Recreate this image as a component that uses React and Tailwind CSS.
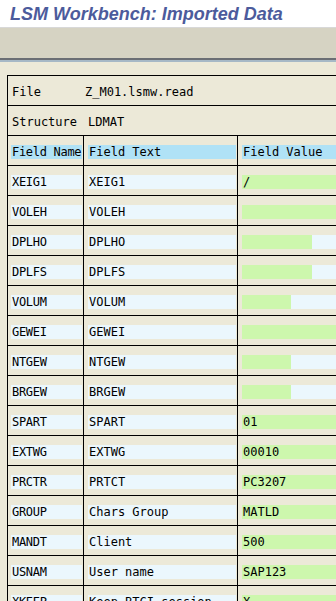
const rows = [
  { name: "XEIG1", text: "XEIG1", value: "/", fill: null },
  { name: "VOLEH", text: "VOLEH", value: "", fill: null },
  { name: "DPLHO", text: "DPLHO", value: "", fill: 70 },
  { name: "DPLFS", text: "DPLFS", value: "", fill: 70 },
  { name: "VOLUM", text: "VOLUM", value: "", fill: 49 },
  { name: "GEWEI", text: "GEWEI", value: "", fill: null },
  { name: "NTGEW", text: "NTGEW", value: "", fill: 49 },
  { name: "BRGEW", text: "BRGEW", value: "", fill: 49 },
  { name: "SPART", text: "SPART", value: "01", fill: null },
  { name: "EXTWG", text: "EXTWG", value: "00010", fill: null },
  { name: "PRCTR", text: "PRTCT", value: "PC3207", fill: null },
  { name: "GROUP", text: "Chars Group", value: "MATLD", fill: null },
  { name: "MANDT", text: "Client", value: "500", fill: null },
  { name: "USNAM", text: "User name", value: "SAP123", fill: null },
  { name: "XKEEP", text: "Keep BTCI session", value: "X", fill: null },
];

const mono = "font-['DejaVu_Sans_Mono',monospace] text-[12px] leading-[14px] text-black whitespace-pre";

function ValueCell({ value, fill }) {
  return (
    <div className="flex h-[14px] w-[190px] bg-[#ebf7fd]">
      <div
        className={`h-[14px] bg-[#cdf7ad] pl-px ${mono}`}
        style={{ width: fill ? fill : "100%" }}
      >
        {value}
      </div>
    </div>
  );
}

function Row({ name, text, children, head }) {
  const bg = head ? "bg-[#b0e2f6]" : "bg-[#ebf7fd]";
  return (
    <div className="h-[30px] border-b border-black flex">
      <div className="w-[76px] shrink-0 border-r border-black pt-[9px] pl-[3px] pr-px">
        <div className={`h-[14px] ${bg} pl-px tracking-[-0.3px] ${mono}`}>{name}</div>
      </div>
      <div className="w-[154px] shrink-0 border-r border-black pt-[9px] pl-[4px] pr-px">
        <div className={`h-[14px] ${bg} pl-px ${mono}`}>{text}</div>
      </div>
      <div className="w-[200px] shrink-0 pt-[9px] pl-[4px]">{children}</div>
    </div>
  );
}

export default function App() {
  return (
    <div className="w-[336px] h-[601px] overflow-hidden bg-[#ece9d8]">
      {/* Title */}
      <div className="h-[28px] bg-white border-b border-[#d8d8d8] pl-[10px] pt-[2px]">
        <span className="font-['Liberation_Sans',Arial,sans-serif] font-bold italic text-[18px] leading-[21px] text-[#4c5b9c]">
          LSM Workbench: Imported Data
        </span>
      </div>

      {/* Toolbar */}
      <div className="h-[30px] bg-[#d6d3c3]" />
      <div className="h-[2px] bg-[#6b6e74]" />
      <div className="h-[2px] bg-[#a6b8c6]" />

      {/* Content */}
      <div className="pl-[7px] pt-[13px]">
        <div className="w-[431px] border-l border-t border-black">
          <div className="h-[30px] border-b border-black pt-[9px] pl-[4px] flex">
            <span className={`w-[73px] shrink-0 ${mono}`}>File</span>
            <span className={mono}>Z_M01.lsmw.read</span>
          </div>
          <div className="h-[30px] border-b border-black pt-[9px] pl-[4px] flex">
            <span className={`w-[76px] shrink-0 ${mono}`}>Structure</span>
            <span className={mono}>LDMAT</span>
          </div>

          <Row name="Field Name" text="Field Text" head>
            <div className={`h-[14px] w-[190px] bg-[#b0e2f6] pl-px ${mono}`}>Field Value</div>
          </Row>

          {rows.map((r) => (
            <Row key={r.name} name={r.name} text={r.text}>
              <ValueCell value={r.value} fill={r.fill} />
            </Row>
          ))}
        </div>
      </div>
    </div>
  );
}
